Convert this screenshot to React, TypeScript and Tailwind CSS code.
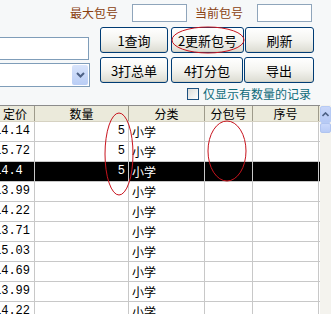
import React from 'react';

const FONT = '"Noto Sans CJK SC", "Liberation Sans", sans-serif';

type Row = { price: string; qty: string; cat: string; selected?: boolean };

const rows: Row[] = [
  { price: '14.14', qty: '5', cat: '小学' },
  { price: '15.72', qty: '5', cat: '小学' },
  { price: '14.4', qty: '5', cat: '小学', selected: true },
  { price: '13.99', qty: '', cat: '小学' },
  { price: '14.22', qty: '', cat: '小学' },
  { price: '13.71', qty: '', cat: '小学' },
  { price: '15.03', qty: '', cat: '小学' },
  { price: '14.69', qty: '', cat: '小学' },
  { price: '13.99', qty: '', cat: '小学' },
  { price: '14.22', qty: '', cat: '小学' },
];

function XpButton({ label, w }: { label: string; w: string }) {
  return (
    <button
      className={`${w} h-[26px] rounded-[3px] border border-[#003c74] bg-gradient-to-b from-white via-[#f4f4f0] to-[#dcdcd2] text-[13px] text-black leading-none shadow-[inset_0_-1px_0_#d0cfc4]`}
    >
      {label}
    </button>
  );
}

export default function App() {
  return (
    <div
      className="relative w-[331px] h-[314px] overflow-hidden bg-[#f6f8f9] text-[12px]"
      style={{ fontFamily: FONT }}
    >
      {/* top labels */}
      <div className="flex items-center justify-end h-[24px] pt-[2px] pr-[19px]">
        <span className="text-[#8a3f10] text-[12px] mr-[14px]">最大包号</span>
        <div className="w-[55px] h-[18px] border border-[#8fa5bb] bg-white mr-[8px]" />
        <span className="text-[#8a3f10] text-[12px] mr-[14px]">当前包号</span>
        <div className="w-[55px] h-[18px] border border-[#8fa5bb] bg-white" />
      </div>

      <div className="flex h-[81px] pt-[3px]">
        {/* left inputs */}
        <div className="w-[100px] flex flex-col pt-[10px]">
          <div className="w-[89px] h-[23px] border border-l-0 border-[#7f9db9] bg-white" />
          <div className="mt-[3px] w-[90px] h-[24px] border border-l-0 border-[#7f9db9] bg-white flex justify-end items-stretch p-[1px]">
            <div className="w-[16px] bg-gradient-to-b from-[#d8e4fb] to-[#b9cdf5] rounded-[2px] flex items-center justify-center">
              <svg width="9" height="6" viewBox="0 0 9 6">
                <path d="M1 1 L4.5 4.5 L8 1" stroke="#4d6185" strokeWidth="2" fill="none" />
              </svg>
            </div>
          </div>
        </div>

        {/* buttons */}
        <div className="flex flex-col">
          <div className="flex gap-[3px]">
            <XpButton label="1查询" w="w-[68px]" />
            <div className="flex gap-[1px]">
              <XpButton label="2更新包号" w="w-[73px]" />
              <XpButton label="刷新" w="w-[69px]" />
            </div>
          </div>
          <div className="flex gap-[3px] mt-[4px]">
            <XpButton label="3打总单" w="w-[68px]" />
            <div className="flex gap-[1px]">
              <XpButton label="4打分包" w="w-[72px]" />
              <XpButton label="导出" w="w-[70px]" />
            </div>
          </div>
          <div className="flex items-center mt-[5px] ml-[87px]">
            <div className="w-[12px] h-[12px] border border-[#1c5180] bg-gradient-to-br from-[#dcdcd7] to-white" />
            <span className="ml-[4px] text-[12px] leading-none text-[#0d6a7a]">仅显示有数量的记录</span>
          </div>
        </div>
      </div>

      {/* grid */}
      <div className="flex">
        <div className="w-[320px] bg-white">
          <div className="flex h-[17px] bg-[#ebeadb] border-t border-[#8c8c8c] border-b border-b-[#d6d2c2] text-[12px] leading-[15px]">
            <div className="w-[35px] border-r border-[#9d9a8a] text-center pr-[4px]">定价</div>
            <div className="w-[94px] border-r border-[#9d9a8a] text-center">数量</div>
            <div className="w-[76px] border-r border-[#9d9a8a] text-center">分类</div>
            <div className="w-[48px] border-r border-[#9d9a8a] text-center">分包号</div>
            <div className="w-[66px] border-r border-[#9d9a8a] text-center">序号</div>
          </div>
          {rows.map((r, i) => (
            <div
              key={i}
              className={`flex h-[20px] border-b border-[#c8c8c8] leading-[19px] ${r.selected ? 'bg-black text-white' : 'text-black'}`}
            >
              <div className="w-[35px] border-r border-[#c8c8c8] overflow-hidden whitespace-nowrap">
                <span className="block ml-[-6px]" style={{ fontFamily: '"Liberation Mono", monospace', fontSize: '12px' }}>
                  {r.price}
                </span>
              </div>
              <div className="w-[94px] border-r border-[#c8c8c8] text-right pr-[3px]" style={{ fontFamily: '"Liberation Mono", monospace' }}>
                {r.qty}
              </div>
              <div className="w-[76px] border-r border-[#c8c8c8] pl-[3px]">{r.cat}</div>
              <div className="w-[48px] border-r border-[#c8c8c8]" />
              <div className="w-[66px] border-r border-[#c8c8c8]" />
            </div>
          ))}
        </div>
        {/* scrollbar */}
        <div className="w-[11px] bg-[#f4f3ee] flex flex-col">
          <div className="h-[17px] mt-[1px] rounded-[2px] bg-gradient-to-b from-[#c8d6f9] to-[#b6c9f5] border border-[#b7cbf5] flex items-center justify-center">
            <svg width="7" height="5" viewBox="0 0 7 5">
              <path d="M0.5 4 L3.5 1 L6.5 4" stroke="#4d6185" strokeWidth="1.6" fill="none" />
            </svg>
          </div>
          <div className="h-[10px] rounded-[2px] bg-gradient-to-b from-[#cad8fb] to-[#b8cbf6] border border-[#b0c4f0]" />
        </div>
      </div>

      {/* red annotation marks */}
      <svg className="absolute inset-0 pointer-events-none" width="331" height="314">
        <ellipse cx="208" cy="40" rx="36" ry="13" fill="none" stroke="#c8141e" strokeWidth="1" />
        <ellipse cx="119" cy="154" rx="14" ry="41" fill="none" stroke="#c8141e" strokeWidth="1" />
        <ellipse cx="227" cy="151" rx="19" ry="30" fill="none" stroke="#c8141e" strokeWidth="1" />
      </svg>
    </div>
  );
}
